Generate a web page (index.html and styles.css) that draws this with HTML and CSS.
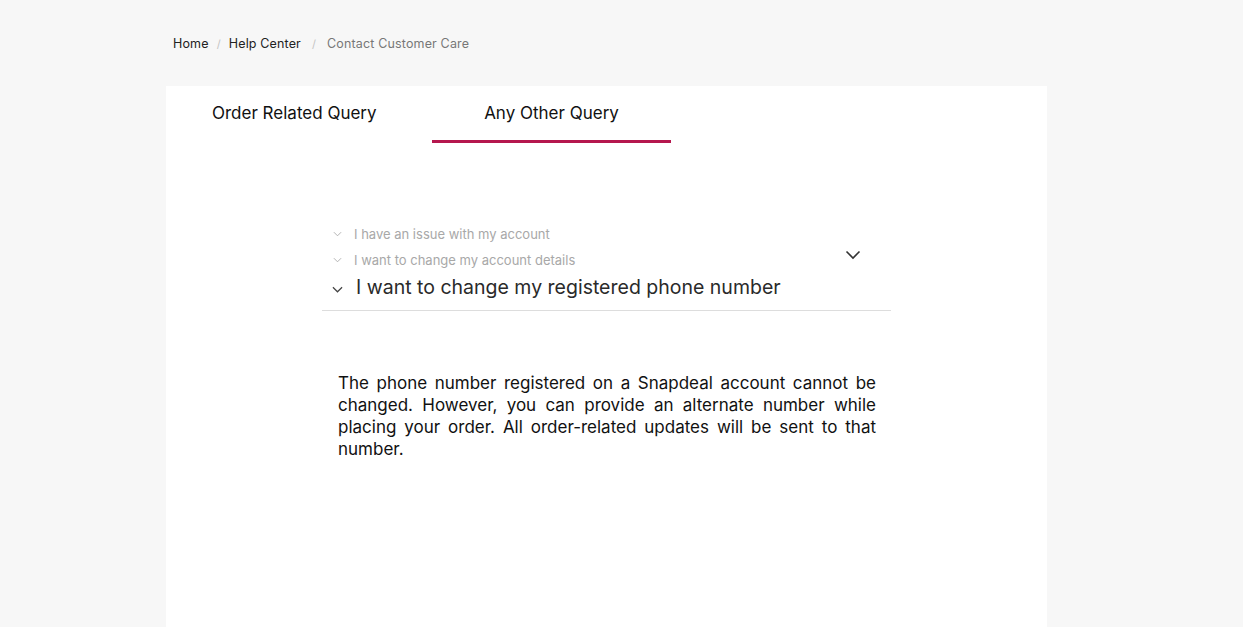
FILE: index.html
```html
<!DOCTYPE html>
<html>
<head>
<meta charset="utf-8">
<link rel="stylesheet" href="styles.css">
</head>
<body>
<nav class="crumbs">
  <a class="crumb">Home</a><span class="sep">/</span>
  <a class="crumb">Help Center</a><span class="sep wide">/</span>
  <span class="crumb current">Contact Customer Care</span>
</nav>
<main class="card">
  <div class="tabs">
    <div class="tab first">Order Related Query</div>
    <div class="tab active">Any Other Query</div>
  </div>
  <section class="query">
    <div class="select">
      <div class="path">
        <div class="crumbline small"><svg class="chev" viewBox="0 0 10 6"><path d="M1 1l4 4 4-4" fill="none" stroke="currentColor" stroke-width="1"/></svg><span>I have an issue with my account</span></div>
        <div class="crumbline small"><svg class="chev" viewBox="0 0 10 6"><path d="M1 1l4 4 4-4" fill="none" stroke="currentColor" stroke-width="1"/></svg><span>I want to change my account details</span></div>
        <div class="crumbline big"><svg class="chev" viewBox="0 0 12 7"><path d="M1 1l5 5 5-5" fill="none" stroke="currentColor" stroke-width="1.3"/></svg><span>I want to change my registered phone number</span></div>
      </div>
      <svg class="toggle" viewBox="0 0 16 10"><path d="M1.5 1.5l6.5 6.5 6.5-6.5" fill="none" stroke="#333" stroke-width="1.6"/></svg>
    </div>
    <p class="answer">The phone number registered on a Snapdeal account cannot be changed. However, you can provide an alternate number while placing your order. All order-related updates will be sent to that number.</p>
  </section>
</main>
</body>
</html>
```
FILE: styles.css
```css
html, body { margin: 0; padding: 0; }
body {
  background: #f7f7f7;
  font-family: Inter, "Noto Sans", sans-serif;
  color: #222;
  height: 627px;
  overflow: hidden;
}
.crumbs {
  display: flex;
  align-items: center;
  padding: 35px 0 0 173px;
  height: 17px;
  font-size: 12.5px;
  letter-spacing: 0.15px;
}
.crumb { color: #222; }
.crumb.current { color: #777; }
.sep { color: #c4c4c4; margin: 0 8px; font-size: 11px; }
.sep.wide { margin: 0 11px 0 11px; }
.card {
  background: #fff;
  margin: 34px 0 0 166px;
  width: 881px;
  height: 560px;
}
.tabs {
  display: flex;
  height: 57px;
}
.tab {
  font-size: 17px;
  color: #111;
  padding-top: 17px;
  box-sizing: border-box;
}
.tab.first { width: 266px; padding-left: 46px; }
.tab.active {
  width: 239px;
  text-align: center;
  border-bottom: 3px solid #b5174e;
}
.query {
  margin-left: 156px;
  width: 569px;
  padding-top: 78px;
}
.select {
  display: flex;
  justify-content: space-between;
  border-bottom: 1px solid #ddd;
  padding-bottom: 9px;
}
.path { padding-left: 10px; }
.crumbline { display: flex; align-items: center; }
.crumbline.small {
  font-size: 13px;
  color: #a8a8a8;
  height: 26px;
}
.crumbline.small .chev { width: 9px; height: 6px; color: #aaa; margin: 0 12px 0 1px; }
.crumbline.big {
  font-size: 19.5px;
  color: #2a2a2a;
  height: 28px;
}
.crumbline.big .chev { width: 11px; height: 7px; color: #444; margin: 4px 13px 0 0; }
.toggle { width: 16px; height: 10px; margin: 29px 30px 0 0; }
.answer {
  margin: 61px 15px 0 16px;
  font-size: 17px;
  line-height: 22px;
  text-align: justify;
  color: #111;
}
```
